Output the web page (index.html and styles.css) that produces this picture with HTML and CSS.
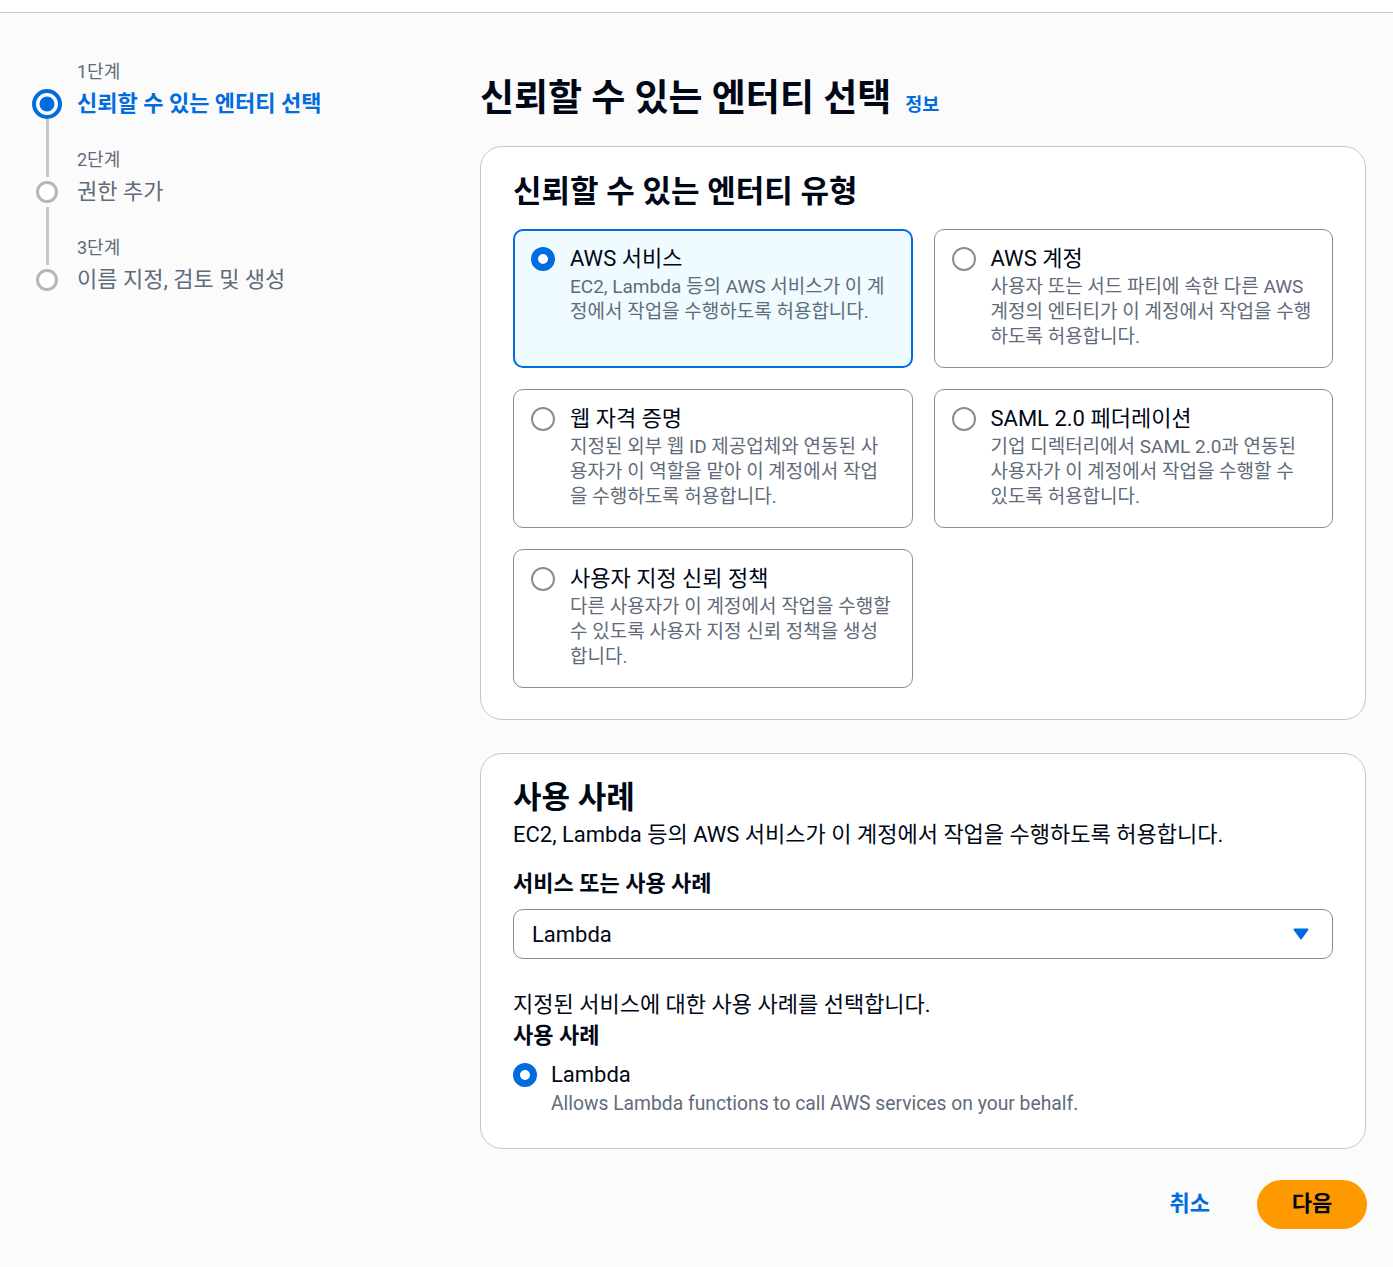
FILE: index.html
```html
<!DOCTYPE html>
<html lang="ko">
<head>
<meta charset="utf-8">
<title>신뢰할 수 있는 엔터티 선택</title>
<link rel="stylesheet" href="styles.css">
</head>
<body>
<div class="topbar"></div>
<div class="layout">
  <nav class="steps">
    <div class="step active">
      <div class="rail">
        <span class="line line-top hidden"></span>
        <span class="node">
          <svg width="30" height="30" viewBox="0 0 30 30"><circle cx="15" cy="15" r="13" fill="none" stroke="#006ce0" stroke-width="4"/><circle cx="15" cy="15" r="7.5" fill="#006ce0"/></svg>
        </span>
        <span class="line line-bottom"></span>
      </div>
      <div class="step-text">
        <div class="step-label">1단계</div>
        <div class="step-title">신뢰할 수 있는 엔터티 선택</div>
      </div>
    </div>
    <div class="step">
      <div class="rail">
        <span class="line line-top"></span>
        <span class="node">
          <svg width="22" height="22" viewBox="0 0 22 22"><circle cx="11" cy="11" r="9.5" fill="#fff" stroke="#b4b4bb" stroke-width="3"/></svg>
        </span>
        <span class="line line-bottom"></span>
      </div>
      <div class="step-text">
        <div class="step-label">2단계</div>
        <div class="step-title">권한 추가</div>
      </div>
    </div>
    <div class="step">
      <div class="rail">
        <span class="line line-top"></span>
        <span class="node">
          <svg width="22" height="22" viewBox="0 0 22 22"><circle cx="11" cy="11" r="9.5" fill="#fff" stroke="#b4b4bb" stroke-width="3"/></svg>
        </span>
        <span class="line line-bottom hidden"></span>
      </div>
      <div class="step-text">
        <div class="step-label">3단계</div>
        <div class="step-title">이름 지정, 검토 및 생성</div>
      </div>
    </div>
  </nav>

  <main class="main">
    <div class="page-header">
      <h1 class="page-title">신뢰할 수 있는 엔터티 선택</h1>
      <a class="info" href="#">정보</a>
    </div>

    <section class="panel">
      <h2 class="panel-title">신뢰할 수 있는 엔터티 유형</h2>
      <div class="tiles">
        <div class="tile selected">
          <span class="radio checked"></span>
          <div class="tile-body">
            <div class="tile-title">AWS 서비스</div>
            <div class="tile-desc">EC2, Lambda 등의 AWS 서비스가 이 계정에서 작업을 수행하도록 허용합니다.</div>
          </div>
        </div>
        <div class="tile">
          <span class="radio"></span>
          <div class="tile-body">
            <div class="tile-title">AWS 계정</div>
            <div class="tile-desc">사용자 또는 서드 파티에 속한 다른 AWS 계정의 엔터티가 이 계정에서 작업을 수행하도록 허용합니다.</div>
          </div>
        </div>
        <div class="tile">
          <span class="radio"></span>
          <div class="tile-body">
            <div class="tile-title">웹 자격 증명</div>
            <div class="tile-desc">지정된 외부 웹 ID 제공업체와 연동된 사용자가 이 역할을 맡아 이 계정에서 작업을 수행하도록 허용합니다.</div>
          </div>
        </div>
        <div class="tile">
          <span class="radio"></span>
          <div class="tile-body">
            <div class="tile-title">SAML 2.0 페더레이션</div>
            <div class="tile-desc">기업 디렉터리에서 SAML 2.0과 연동된 사용자가 이 계정에서 작업을 수행할 수 있도록 허용합니다.</div>
          </div>
        </div>
        <div class="tile">
          <span class="radio"></span>
          <div class="tile-body">
            <div class="tile-title">사용자 지정 신뢰 정책</div>
            <div class="tile-desc">다른 사용자가 이 계정에서 작업을 수행할 수 있도록 사용자 지정 신뢰 정책을 생성합니다.</div>
          </div>
        </div>
      </div>
    </section>

    <section class="panel usecase">
      <h2 class="panel-title">사용 사례</h2>
      <p class="panel-desc">EC2, Lambda 등의 AWS 서비스가 이 계정에서 작업을 수행하도록 허용합니다.</p>
      <div class="field-label">서비스 또는 사용 사례</div>
      <div class="select">
        <span class="select-value">Lambda</span>
        <svg class="caret" width="16" height="12" viewBox="0 0 16 12"><path d="M1.5 1.5 H14.5 L8 10.5 Z" fill="#006ce0" stroke="#006ce0" stroke-width="2" stroke-linejoin="round"/></svg>
      </div>
      <p class="field-desc">지정된 서비스에 대한 사용 사례를 선택합니다.</p>
      <div class="field-label tight">사용 사례</div>
      <div class="option">
        <span class="radio checked"></span>
        <div class="option-body">
          <div class="option-title">Lambda</div>
          <div class="option-desc">Allows Lambda functions to call AWS services on your behalf.</div>
        </div>
      </div>
    </section>

    <div class="actions">
      <button class="btn-link" type="button">취소</button>
      <button class="btn-primary" type="button">다음</button>
    </div>
  </main>
</div>
</body>
</html>
```

FILE: styles.css
```css
* { box-sizing: border-box; }

html, body {
  margin: 0;
  padding: 0;
}

body {
  background: #fbfbfb;
  color: #000716;
  font-family: Roboto, "Noto Sans CJK KR", sans-serif;
  min-height: 1267px;
}

.topbar {
  height: 13px;
  background: #ffffff;
  border-bottom: 1px solid #c6c6cd;
}

.layout {
  display: flex;
  padding: 47px 27px 0 32px;
}

/* ---------- steps ---------- */
.steps {
  width: 448px;
  flex: none;
  display: flex;
  flex-direction: column;
}

.step {
  display: flex;
  gap: 15px;
}

.rail {
  width: 30px;
  flex: none;
  display: flex;
  flex-direction: column;
  align-items: center;
}

.line {
  width: 3px;
  background: #c6c6cd;
}

.line-top { height: 29px; }
.line-bottom { flex: 1; }
.line.hidden { visibility: hidden; }

.node {
  width: 30px;
  height: 30px;
  display: flex;
  align-items: center;
  justify-content: center;
}

.node svg { display: block; }

.step-text { padding-bottom: 29px; }

.step-label {
  font-size: 18px;
  line-height: 24px;
  color: #5f6b7a;
}

.step-title {
  margin-top: 5px;
  font-size: 22px;
  line-height: 30px;
  color: #5f6b7a;
}

.step.active .step-title {
  color: #006ce0;
  font-weight: 700;
}

/* ---------- main ---------- */
.main {
  flex: 1;
  min-width: 0;
}

.page-header {
  margin-top: 16px;
  display: flex;
  align-items: baseline;
  gap: 14px;
  height: 46px;
}

.page-title {
  margin: 0;
  font-size: 37px;
  line-height: 46px;
  font-weight: 700;
}

.info {
  font-size: 18.5px;
  line-height: 1;
  font-weight: 700;
  color: #006ce0;
  text-decoration: none;
}

.panel {
  margin-top: 24px;
  background: #ffffff;
  border: 1px solid #c6c6cd;
  border-radius: 22px;
  padding: 26px 32px 31px 32px;
}

.panel-title {
  margin: 0;
  font-size: 31px;
  line-height: 38px;
  font-weight: 700;
}

.tiles {
  margin-top: 18px;
  display: grid;
  grid-template-columns: 1fr 1fr;
  gap: 21px;
}

.tile {
  display: flex;
  gap: 15px;
  border: 1px solid #8c8c94;
  border-radius: 10px;
  padding: 15px 18px 18px 17px;
  background: #ffffff;
}

.tile.selected {
  border: 2px solid #006ce0;
  background: #f0fbff;
  padding: 14px 17px 17px 16px;
}

.radio {
  flex: none;
  width: 24px;
  height: 24px;
  margin-top: 2px;
  border-radius: 50%;
  border: 2px solid #8c8c94;
  background: #ffffff;
}

.radio.checked {
  border: 7px solid #006ce0;
}

.tile-body { min-width: 0; }

.tile-title {
  font-size: 22px;
  line-height: 28px;
  padding-bottom: 1px;
}

.tile-desc {
  font-size: 19px;
  line-height: 25px;
  color: #5f6b7a;
}

/* ---------- use case ---------- */
.usecase {
  margin-top: 33px;
  padding-top: 25px;
}

.panel-desc {
  margin: 3px 0 0;
  font-size: 22px;
  line-height: 30px;
}

.field-label {
  margin-top: 19px;
  font-size: 22px;
  line-height: 30px;
  font-weight: 700;
}

.field-label.tight { margin-top: 1px; }

.select {
  margin-top: 10px;
  height: 50px;
  border: 1px solid #8c8c94;
  border-radius: 10px;
  background: #ffffff;
  display: flex;
  align-items: center;
  justify-content: space-between;
  padding: 0 23px 0 18px;
}

.select-value {
  font-size: 22px;
}

.caret { display: block; }

.field-desc {
  margin: 31px 0 0;
  font-size: 22px;
  line-height: 30px;
}

.option {
  margin-top: 9px;
  display: flex;
  gap: 14px;
}

.option .radio { margin-top: 3px; }

.option-title {
  font-size: 22px;
  line-height: 30px;
}

.option-desc {
  font-size: 19.3px;
  line-height: 27px;
  color: #5f6b7a;
}

/* ---------- actions ---------- */
.actions {
  margin-top: 31px;
  display: flex;
  justify-content: flex-end;
  gap: 22px;
  margin-right: -1px;
}

.btn-link,
.btn-primary {
  height: 49px;
  border: none;
  font-family: inherit;
  font-size: 22px;
  font-weight: 700;
  padding-top: 0;
  padding-bottom: 7px;
  cursor: pointer;
}

.btn-link {
  background: transparent;
  color: #006ce0;
  padding-left: 25px;
  padding-right: 25px;
}

.btn-primary {
  background: #ff9900;
  color: #000716;
  border-radius: 25px;
  padding-left: 0;
  padding-right: 0;
  width: 110px;
}
```
